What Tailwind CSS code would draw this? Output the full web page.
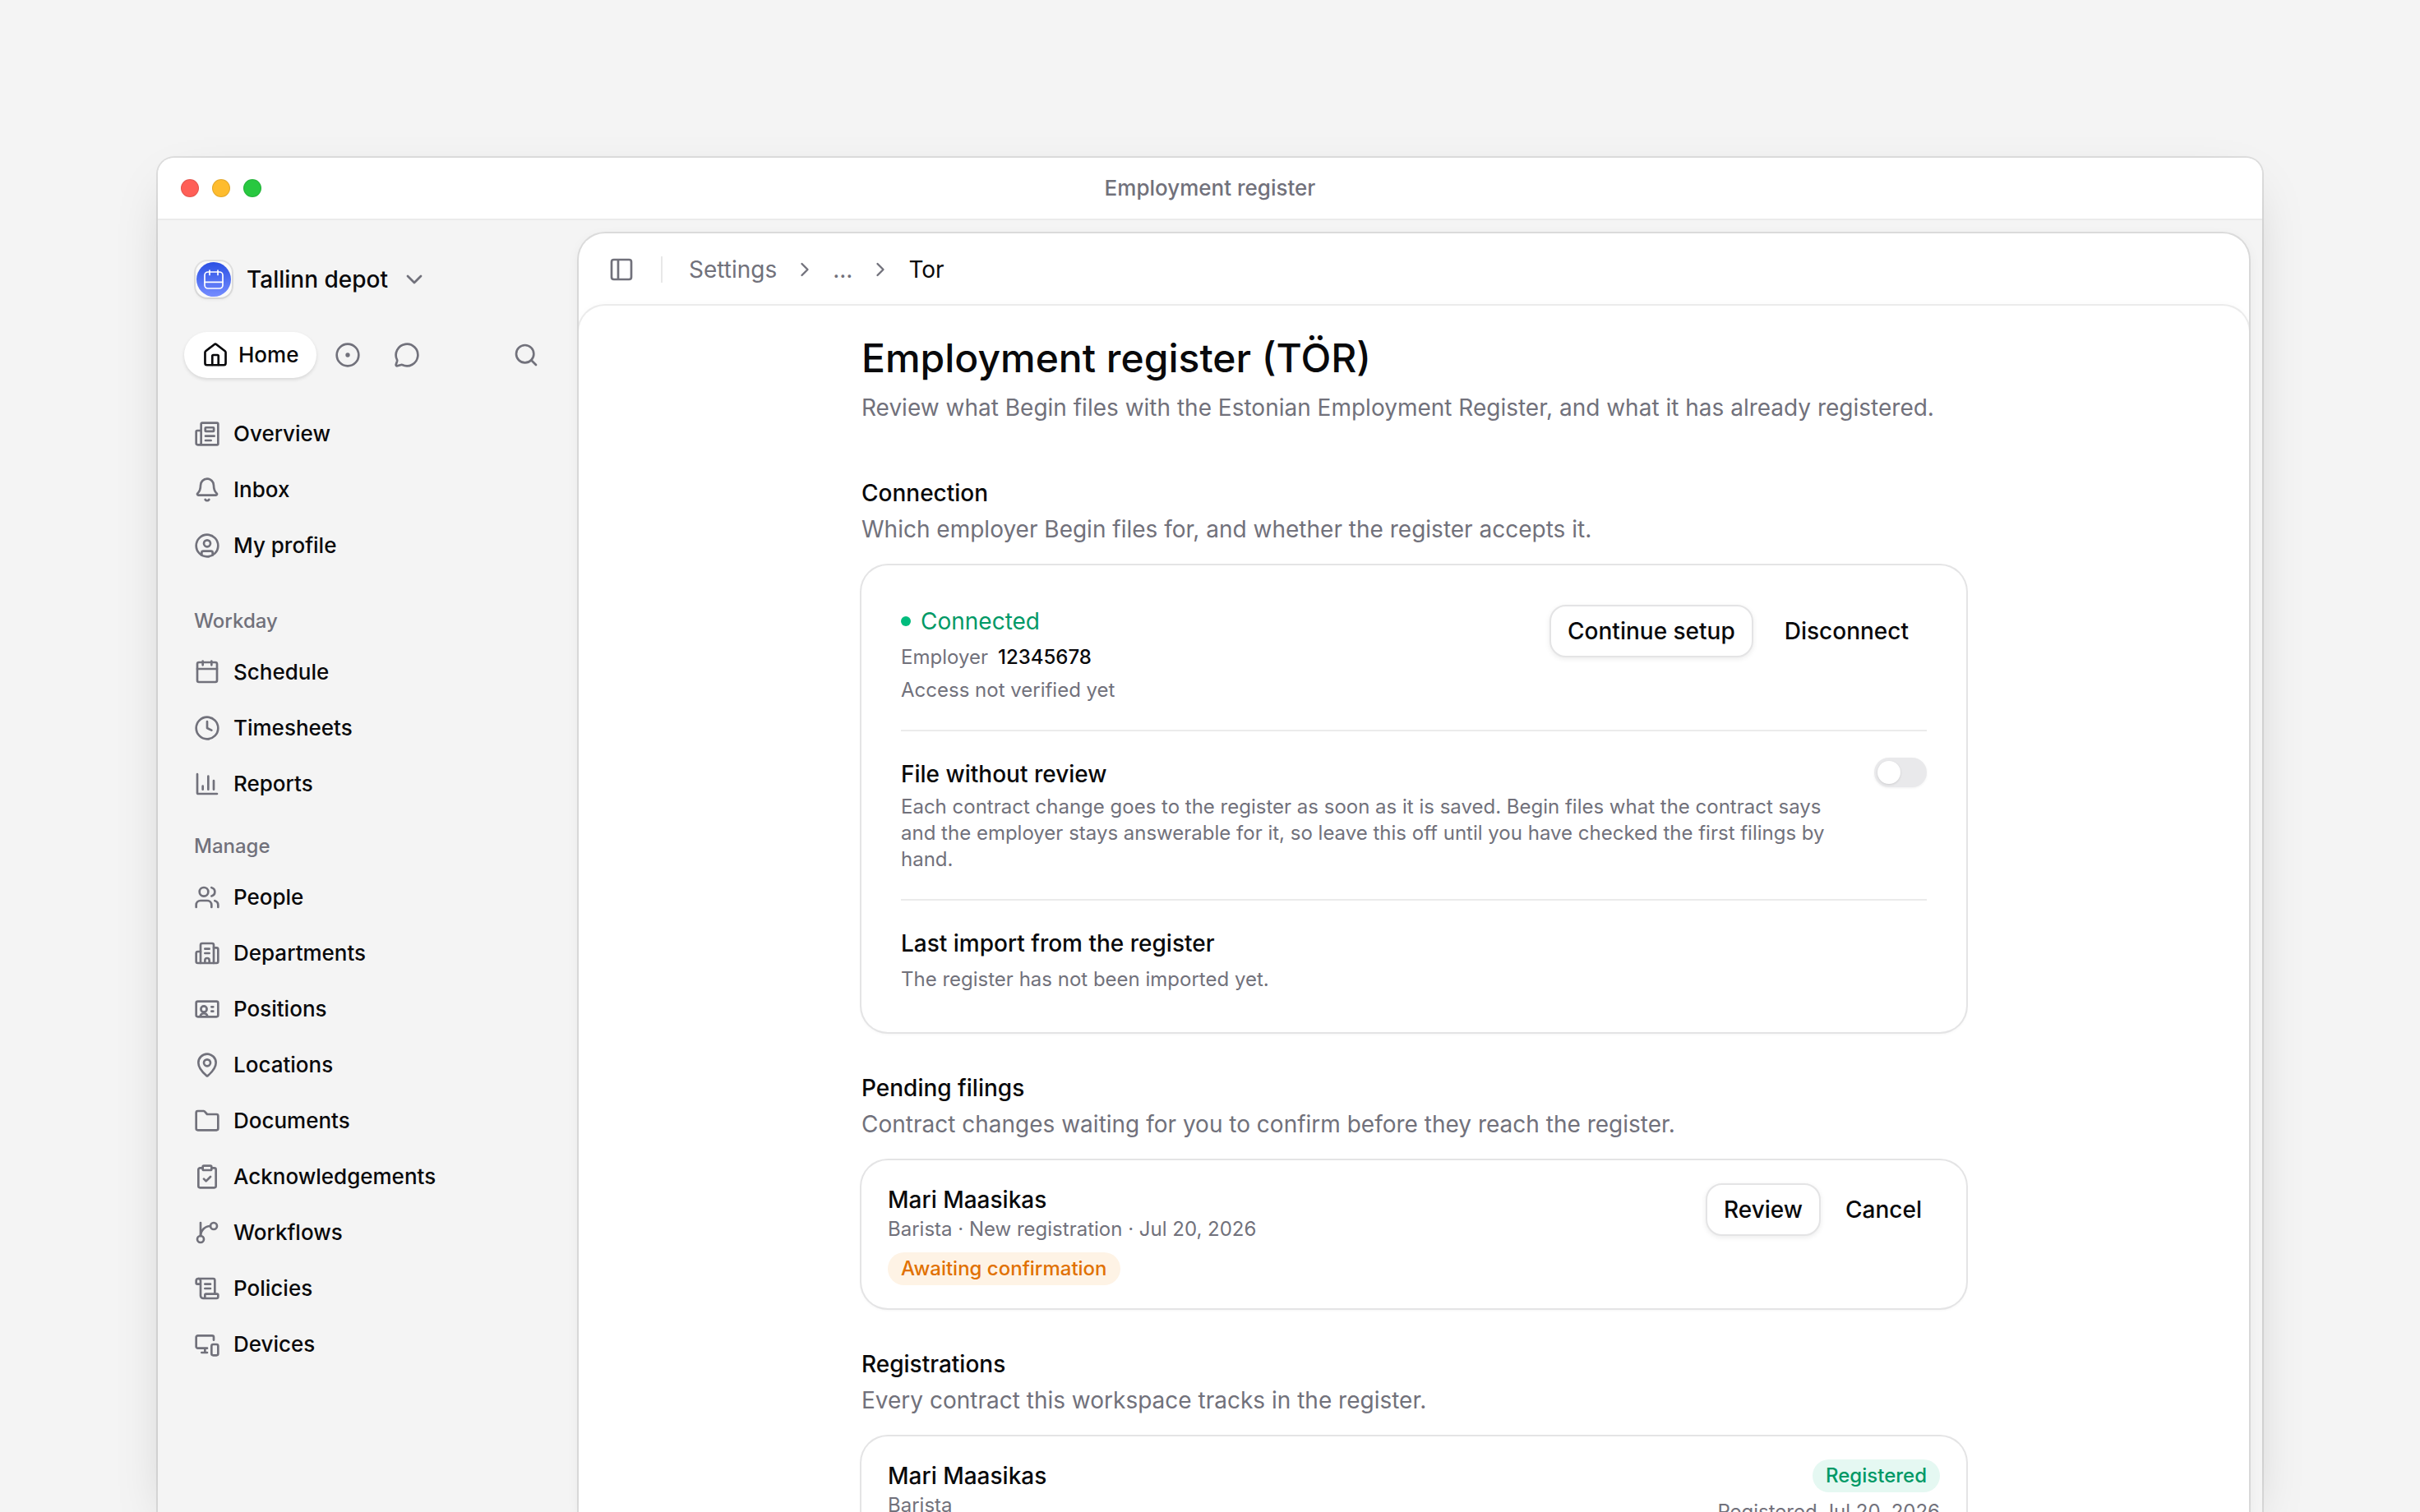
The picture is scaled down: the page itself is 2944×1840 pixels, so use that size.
<!DOCTYPE html>
<html lang="en">
<head>
    <meta charset="UTF-8">
    <meta name="viewport" content="width=device-width, initial-scale=1.0">
    <title>Employment register</title>
    <script src="https://cdn.jsdelivr.net/npm/@tailwindcss/browser@4"></script>
</head>
<body class="h-screen overflow-hidden bg-[#f4f4f4] px-48 pt-48 font-['Inter',sans-serif] text-[28px] leading-10 text-[#09090b]">
    <!-- icons used more than once or in lists -->
    <svg class="hidden">
        <symbol id="chevron-down" viewBox="0 0 24 24"><path d="m6 9 6 6 6-6"/></symbol>
        <symbol id="chevron-right" viewBox="0 0 24 24"><path d="m9 18 6-6-6-6"/></symbol>
        <symbol id="home" viewBox="0 0 24 24"><path d="M9.200 21v-8a1 1 0 0 1 1-1h3.600a1 1 0 0 1 1 1v8"/><path d="M2.600 9.600a1.600 1.600 0 0 1 .6-1.200L11 2.400a1.600 1.600 0 0 1 2 0l7.800 6a1.600 1.600 0 0 1 .6 1.200V19.500a1.700 1.700 0 0 1-1.700 1.700H4.300a1.700 1.700 0 0 1-1.700-1.700z"/></symbol>
        <symbol id="circle-dot" viewBox="0 0 24 24"><circle cx="12" cy="12" r="10"/><circle cx="12" cy="12" r="1"/></symbol>
        <symbol id="message" viewBox="0 0 24 24"><path d="M2.992 16.342a2 2 0 0 1 .094 1.167l-1.065 3.290a1 1 0 0 0 1.236 1.168l3.413-.998a2 2 0 0 1 1.099.092 10 10 0 1 0-4.777-4.719"/></symbol>
        <symbol id="search" viewBox="0 0 24 24"><circle cx="11" cy="11" r="8"/><path d="m21 21-4.300-4.300"/></symbol>
        <symbol id="news" viewBox="0 0 24 24"><path d="M3.500 22H21a1 1 0 0 0 1-1V3a1 1 0 0 0-1-1H7.500a1 1 0 0 0-1 1v17.500a1.500 1.500 0 0 1-1.500 1.500H3.500A1.500 1.500 0 0 1 2 20.500V10a1 1 0 0 1 1-1h3"/><rect x="10.300" y="6.200" width="7.800" height="3.500" rx=".6"/><path d="M10.500 14h8M10.500 18h5"/></symbol>
        <symbol id="bell" viewBox="0 0 24 24"><path d="M10.300 21a2 2 0 0 0 3.400 0"/><path d="M3.300 15.300A1 1 0 0 0 4 17h16a1 1 0 0 0 .7-1.700C19.400 14 18 12.500 18 8A6 6 0 0 0 6 8c0 4.500-1.400 6-2.700 7.300"/></symbol>
        <symbol id="user" viewBox="0 0 24 24"><circle cx="12" cy="12" r="10"/><circle cx="12" cy="10" r="3"/><path d="M7 20.600V18.500a1.500 1.500 0 0 1 1.500-1.500h7a1.500 1.500 0 0 1 1.500 1.500v2.100"/></symbol>
        <symbol id="calendar" viewBox="0 0 24 24"><rect x="3" y="3" width="18" height="18" rx="1.500"/><path d="M8 2v3.500M16 2v3.500M3 9h18"/></symbol>
        <symbol id="clock" viewBox="0 0 24 24"><circle cx="12" cy="12" r="10"/><path d="M12 6v6l4 2"/></symbol>
        <symbol id="chart" viewBox="0 0 24 24"><path d="M3 3v17a1 1 0 0 0 1 1h17"/><path d="M13 17V5M18 17V9M8 17v-3"/></symbol>
        <symbol id="people" viewBox="0 0 24 24"><path d="M16 21v-2a4 4 0 0 0-4-4H6a4 4 0 0 0-4 4v2"/><circle cx="9" cy="7" r="4"/><path d="M22 21v-2a4 4 0 0 0-3-3.870M16 3.130a4 4 0 0 1 0 7.750"/></symbol>
        <symbol id="building" viewBox="0 0 24 24"><path d="M6 21V4.500A1.500 1.500 0 0 1 7.500 3h9A1.500 1.500 0 0 1 18 4.500V21"/><path d="M6 10.500H3.500A1.500 1.500 0 0 0 2 12v7.500A1.500 1.500 0 0 0 3.500 21h17a1.500 1.500 0 0 0 1.500-1.500v-11A1.500 1.500 0 0 0 20.500 7H18M10 8h4M10 12h4M10 21v-2.500a2 2 0 0 1 4 0V21"/></symbol>
        <symbol id="id-card" viewBox="0 0 24 24"><rect x="2" y="5" width="20" height="14" rx="1.500"/><circle cx="9" cy="12" r="2.700"/><path d="M5.700 18.500a3.400 3.400 0 0 1 6.600 0M16 10h1.500M16 14h1.500"/></symbol>
        <symbol id="pin" viewBox="0 0 24 24"><path d="M20 10c0 5-5.500 10.200-7.400 11.800a1 1 0 0 1-1.200 0C9.500 20.200 4 15 4 10a8 8 0 0 1 16 0"/><circle cx="12" cy="10" r="3"/></symbol>
        <symbol id="folder" viewBox="0 0 24 24"><path d="M3.500 20.500h17a1.500 1.500 0 0 0 1.500-1.500V7.500A1.500 1.500 0 0 0 20.500 6H12L9.900 3.600A1.500 1.500 0 0 0 8.800 3H3.500A1.500 1.500 0 0 0 2 4.500V19a1.500 1.500 0 0 0 1.500 1.500z"/></symbol>
        <symbol id="clipboard" viewBox="0 0 24 24"><rect x="8" y="2" width="8" height="4" rx="1"/><path d="M16 4h2.500A1.500 1.500 0 0 1 20 5.500v15a1.500 1.500 0 0 1-1.500 1.500h-13A1.500 1.500 0 0 1 4 20.500v-15A1.500 1.500 0 0 1 5.500 4H8M9 14l2 2 4-4"/></symbol>
        <symbol id="branch" viewBox="0 0 24 24"><path d="M6 3v12"/><circle cx="18" cy="6" r="3"/><circle cx="6" cy="18" r="3"/><path d="M15 6a9 9 0 0 0-9 9"/></symbol>
        <symbol id="scroll" viewBox="0 0 24 24"><path d="M10 8h5M10 12h5"/><path d="M19 17V4.500A1.500 1.500 0 0 0 17.500 3H4"/><path d="M8 21h12.500a1.500 1.500 0 0 0 1.500-1.500V18a1 1 0 0 0-1-1H11a1 1 0 0 0-1 1v1.500A1.500 1.500 0 0 1 8.500 21 2.500 2.500 0 0 1 6 18.500V5a2 2 0 0 0-4 0v2a1 1 0 0 0 1 1h3"/></symbol>
        <symbol id="devices" viewBox="0 0 24 24"><path d="M18 8V5.500A1.500 1.500 0 0 0 16.500 4h-13A1.500 1.500 0 0 0 2 5.500v8.500A1.500 1.500 0 0 0 3.500 15.500H12M10 15.500v4M7 19.500h5"/><rect x="16" y="12" width="6" height="10" rx="1.500"/></symbol>
        <symbol id="panel" viewBox="0 0 24 24"><rect x="3" y="3" width="18" height="18" rx="2"/><path d="M9 3v18"/></symbol>
    </svg>

    <div class="flex h-full flex-col rounded-t-[20px] bg-[#f4f4f4] shadow-[0_0_0_2px_rgba(0,0,0,0.09),0_24px_64px_-24px_rgba(0,0,0,0.25)]">
        <div class="grid h-[76px] shrink-0 grid-cols-3 items-center rounded-t-[20px] border-b-2 border-[#ebebeb] bg-white px-7">
            <div class="flex gap-4">
                <span class="size-[22px] rounded-full border border-black/10 bg-[#ff5f57]"></span>
                <span class="size-[22px] rounded-full border border-black/10 bg-[#febc2e]"></span>
                <span class="size-[22px] rounded-full border border-black/10 bg-[#28c840]"></span>
            </div>
            <div class="text-center text-[26px] font-medium text-[#71717b]">Employment register</div>
        </div>

        <div class="flex min-h-0 flex-1 overflow-hidden">
            <aside class="w-[512px] shrink-0 px-8 pt-[42px] text-[26px] font-medium">
                <button class="flex h-15 items-center pl-[14px] text-[28px]">
                    <span class="flex size-11 items-center justify-center rounded-[14px] bg-[#fafafa] shadow-[0_0_0_2px_rgba(0,0,0,0.08),0_2px_4px_rgba(0,0,0,0.08)]">
                        <span class="size-[42px] rounded-full bg-linear-to-b from-[#2b4fe3] to-[#758cff]">
                            <svg class="size-[42px] fill-none stroke-white stroke-[1.700px] [stroke-linecap:round]" viewBox="0 0 42 42"><rect x="10" y="12" width="22" height="20" rx="4"/><path d="M16 10v5.500M26 10v5.500M10 24.300h22"/></svg>
                        </span>
                    </span>
                    <span class="ml-[18px] mr-4">Tallinn depot</span>
                    <svg class="size-8 fill-none stroke-[#71717b] stroke-2 [stroke-linecap:round] [stroke-linejoin:round]"><use href="#chevron-down"/></svg>
                </button>
                <div class="mt-[34px] flex h-14 items-center gap-1 fill-none stroke-2 text-[#71717b] [stroke-linecap:round] [stroke-linejoin:round]">
                    <button class="flex h-14 items-center gap-3 rounded-full bg-white px-[22px] text-[#09090b] shadow-[0_2px_4px_rgba(0,0,0,0.12)]"><svg class="size-8 stroke-current"><use href="#home"/></svg>Home</button>
                    <button class="flex h-14 w-17 items-center justify-center" aria-label="Activity"><svg class="size-8 stroke-current"><use href="#circle-dot"/></svg></button>
                    <button class="flex h-14 w-17 items-center justify-center" aria-label="Messages"><svg class="size-8 stroke-current"><use href="#message"/></svg></button>
                    <button class="ml-auto flex h-14 w-16 items-center justify-center" aria-label="Search"><svg class="size-8 stroke-current"><use href="#search"/></svg></button>
                </div>
                <nav class="pt-[34px] pl-3" id="nav"></nav>
            </aside>

            <main class="mt-4 mr-4 flex min-w-0 flex-1 flex-col overflow-hidden rounded-t-[32px] bg-white shadow-[0_0_0_2px_rgba(0,0,0,0.09),0_4px_16px_rgba(0,0,0,0.06)]">
                <header class="flex h-[88px] shrink-0 items-center pl-[36px]">
                    <button aria-label="Toggle sidebar"><svg class="size-8 fill-none stroke-[#71717b] stroke-2"><use href="#panel"/></svg></button>
                    <span class="mr-8 ml-8 h-8 w-[2px] bg-[#e8e8e8]"></span>
                    <nav class="flex items-center gap-5 fill-none stroke-2 text-[#71717b] [stroke-linecap:round] [stroke-linejoin:round]" aria-label="Breadcrumb">
                        <a href="#">Settings</a>
                        <svg class="size-7 stroke-current"><use href="#chevron-right"/></svg>
                        <a href="#">...</a>
                        <svg class="size-7 stroke-current"><use href="#chevron-right"/></svg>
                        <span class="text-[#09090b]">Tor</span>
                    </nav>
                </header>

                <div class="flex-1 rounded-t-[32px] pt-8 shadow-[0_0_0_2px_#ebebeb,0_0_12px_rgba(0,0,0,0.03)]">
                    <div class="mx-auto max-w-[1344px]">
                        <h1 class="text-[48px] leading-16 font-medium">Employment register (TÖR)</h1>
                        <p class="mt-2 text-[#71717b]">Review what Begin files with the Estonian Employment Register, and what it has already registered.</p>

                        <section class="mt-16">
                            <h2 class="font-medium">Connection</h2>
                            <p class="mt-1 text-[#71717b]">Which employer Begin files for, and whether the register accepts it.</p>
                            <div class="mt-6 divide-y-2 divide-[#ebebeb] rounded-[32px] p-12 shadow-[0_0_0_2px_#e4e4e5,0_2px_4px_rgba(0,0,0,0.06)]">
                                <div class="flex items-start justify-between pb-8">
                                    <div class="space-y-2 text-[24px] leading-8 text-[#71717b]">
                                        <p class="flex items-center gap-3 text-[28px] leading-10 text-[#009966]"><span class="size-3 rounded-full bg-[#00bc7d]"></span>Connected</p>
                                        <p class="flex gap-3">Employer <span class="font-medium text-[#09090b]">12345678</span></p>
                                        <p>Access not verified yet</p>
                                    </div>
                                    <div class="flex gap-4 font-medium">
                                        <button class="h-16 rounded-[20px] border-2 border-[#e4e4e5] bg-white px-5 shadow-[0_2px_6px_rgba(0,0,0,0.08)]">Continue setup</button>
                                        <button class="h-16 px-[22px]">Disconnect</button>
                                    </div>
                                </div>
                                <div class="flex items-start justify-between gap-8 py-8">
                                    <div>
                                        <label for="auto-file" class="block font-medium">File without review</label>
                                        <p class="mt-1 text-[24px] leading-8 text-[#71717b]">Each contract change goes to the register as soon as it is saved. Begin files what the contract says and the employer stays answerable for it, so leave this off until you have checked the first filings by hand.</p>
                                    </div>
                                    <input type="checkbox" role="switch" id="auto-file" class="flex h-9 w-16 shrink-0 appearance-none rounded-full bg-[#e9e9eb] p-1 shadow-[0_1px_3px_rgba(0,0,0,0.06)] before:size-7 before:rounded-full before:bg-white before:shadow-[0_1px_3px_rgba(0,0,0,0.12)] before:content-[''] checked:bg-[#009966] checked:before:ml-auto">
                                </div>
                                <div class="pt-8">
                                    <h3 class="font-medium">Last import from the register</h3>
                                    <p class="mt-2 text-[24px] leading-8 text-[#71717b]">The register has not been imported yet.</p>
                                </div>
                            </div>
                        </section>

                        <section class="mt-12">
                            <h2 class="font-medium">Pending filings</h2>
                            <p class="mt-1 text-[#71717b]">Contract changes waiting for you to confirm before they reach the register.</p>
                            <div class="mt-6 flex items-start justify-between rounded-[32px] px-8 py-7 shadow-[0_0_0_2px_#e4e4e5,0_2px_4px_rgba(0,0,0,0.06)]">
                                <div>
                                    <h3 class="font-medium">Mari Maasikas</h3>
                                    <p class="text-[24px] leading-8 text-[#71717b]">Barista · New registration · Jul 20, 2026</p>
                                    <span class="mt-3 block w-fit rounded-full bg-[#fef3e5] px-4 text-[24px] font-medium text-[#e17100]">Awaiting confirmation</span>
                                </div>
                                <div class="flex gap-2 font-medium">
                                    <button class="h-16 rounded-[20px] border-2 border-[#e4e4e5] bg-white px-5 shadow-[0_2px_6px_rgba(0,0,0,0.08)]">Review</button>
                                    <button class="h-16 px-[22px]">Cancel</button>
                                </div>
                            </div>
                        </section>

                        <section class="mt-12">
                            <h2 class="font-medium">Registrations</h2>
                            <p class="mt-1 text-[#71717b]">Every contract this workspace tracks in the register.</p>
                            <div class="mt-6 flex items-start justify-between rounded-[32px] px-8 py-7 shadow-[0_0_0_2px_#e4e4e5,0_2px_4px_rgba(0,0,0,0.06)]">
                                <div>
                                    <h3 class="font-medium">Mari Maasikas</h3>
                                    <p class="text-[24px] leading-8 text-[#71717b]">Barista</p>
                                </div>
                                <div class="flex flex-col items-end gap-2 text-[24px]">
                                    <span class="rounded-full bg-[#e5f8f2] px-4 font-medium text-[#009966]">Registered</span>
                                    <p class="leading-8 text-[#71717b]">Registered Jul 20, 2026</p>
                                </div>
                            </div>
                        </section>
                    </div>
                </div>
            </main>
        </div>
    </div>

    <script>
        const groups = [
            { items: [['news', 'Overview'], ['bell', 'Inbox'], ['user', 'My profile']] },
            { title: 'Workday', space: 'pt-[30px]', items: [['calendar', 'Schedule'], ['clock', 'Timesheets'], ['chart', 'Reports']] },
            { title: 'Manage', space: 'pt-[14px]', items: [['people', 'People'], ['building', 'Departments'], ['id-card', 'Positions'], ['pin', 'Locations'], ['folder', 'Documents'], ['clipboard', 'Acknowledgements'], ['branch', 'Workflows'], ['scroll', 'Policies'], ['devices', 'Devices']] },
        ];
        const nav = document.getElementById('nav');

        for (const group of groups) {
            const div = document.createElement('div');
            div.className = group.space || '';
            if (group.title) {
                div.innerHTML = `<h2 class="text-[24px] leading-14 text-[#71717b]">${group.title}</h2>`;
            }
            for (const [icon, name] of group.items) {
                div.innerHTML += `<a href="#" class="flex h-17 items-center gap-4"><svg class="size-8 fill-none stroke-[#71717b] stroke-2 [stroke-linecap:round] [stroke-linejoin:round]"><use href="#${icon}"/></svg>${name}</a>`;
            }
            nav.appendChild(div);
        }
    </script>
</body>
</html>
